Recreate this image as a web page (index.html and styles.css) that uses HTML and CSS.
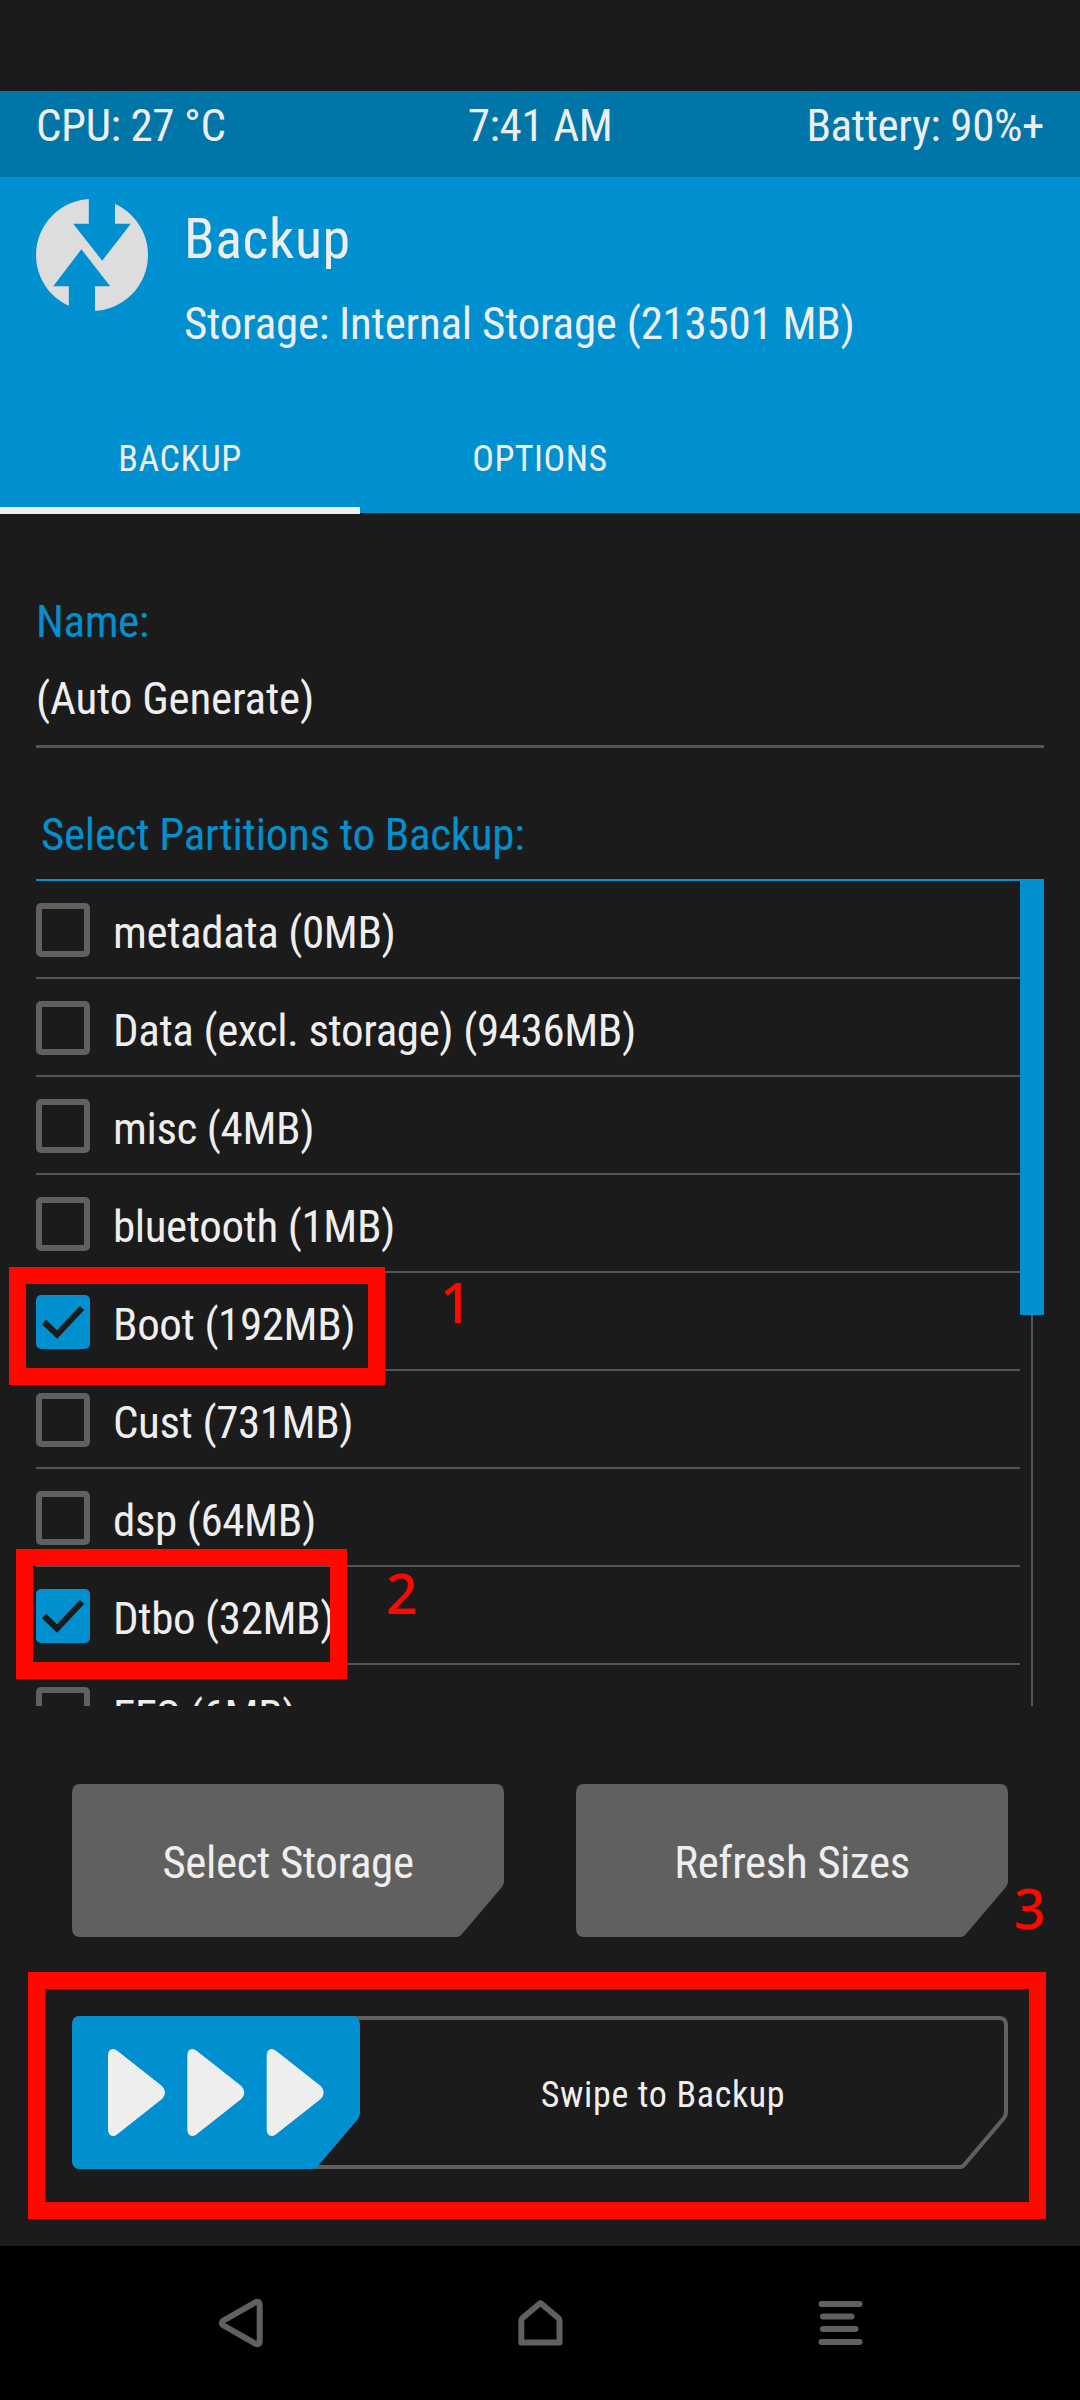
FILE: index.html
```html
<!DOCTYPE html>
<html lang="en">
<head>
<meta charset="utf-8">
<title>Backup</title>
<link rel="stylesheet" href="styles.css">
</head>
<body>
<div class="screen">
  <div class="statusbar">
    <span class="t">CPU: 27 °C</span>
    <span class="t mid">7:41 AM</span>
    <span class="t end">Battery: 90%+</span>
  </div>
  <header class="header">
    <div class="title-row">
      <svg class="logo" viewBox="0 0 112 112" width="112" height="112">
        <circle cx="56" cy="56" r="56" fill="#ddd"/>
        <path class="cut" d="M52.8 -1H79V24.7H94.8L66.2 61.7L37.2 24.7H52.8Z"/>
        <path class="cut" d="M59 113H32.8V87.3H17.2L45.4 50.3L74.2 87.3H59Z"/>
      </svg>
      <div class="titles">
        <h1 class="title"><span class="t">Backup</span></h1>
        <p class="subtitle"><span class="t">Storage: Internal Storage (213501 MB)</span></p>
      </div>
    </div>
    <nav class="tabs">
      <div class="tab active"><span class="t">BACKUP</span></div>
      <div class="tab"><span class="t">OPTIONS</span></div>
    </nav>
  </header>
  <main class="content">
    <div class="label"><span class="t">Name:</span></div>
    <div class="field"><span class="t">(Auto Generate)</span></div>
    <div class="list-title"><span class="t">Select Partitions to Backup:</span></div>
    <div class="list">
      <ul class="rows">
        <li class="row"><i class="box"></i><span class="t">metadata (0MB)</span></li>
        <li class="row"><i class="box"></i><span class="t">Data (excl. storage) (9436MB)</span></li>
        <li class="row"><i class="box"></i><span class="t">misc (4MB)</span></li>
        <li class="row"><i class="box"></i><span class="t">bluetooth (1MB)</span></li>
        <li class="row"><svg class="check" viewBox="0 0 54 54"><rect width="54" height="54" rx="5"/><path d="M8 27L21 39.5L46 13"/></svg><span class="t">Boot (192MB)</span></li>
        <li class="row"><i class="box"></i><span class="t">Cust (731MB)</span></li>
        <li class="row"><i class="box"></i><span class="t">dsp (64MB)</span></li>
        <li class="row"><svg class="check" viewBox="0 0 54 54"><rect width="54" height="54" rx="5"/><path d="M8 27L21 39.5L46 13"/></svg><span class="t">Dtbo (32MB)</span></li>
        <li class="row"><i class="box"></i><span class="t">EFS (6MB)</span></li>
      </ul>
      <div class="scroll"><div class="thumb"></div><div class="track"></div></div>
    </div>
    <div class="buttons">
      <div class="button">
        <svg viewBox="0 0 432 153"><path d="M8 0H424Q432 0 432 9V98Q432 100 430 103L390 150Q388 153 384 153H8Q0 153 0 144V9Q0 0 8 0Z"/></svg>
        <span class="t">Select Storage</span>
      </div>
      <div class="button">
        <svg viewBox="0 0 432 153"><path d="M8 0H424Q432 0 432 9V98Q432 100 430 103L390 150Q388 153 384 153H8Q0 153 0 144V9Q0 0 8 0Z"/></svg>
        <span class="t">Refresh Sizes</span>
      </div>
    </div>
    <div class="slider">
      <svg viewBox="0 0 936 153">
        <path class="outline" d="M8 2H927Q934 2 934 9V96Q934 99 932 102L893 148Q891 151 888 151H8Q2 151 2 144V9Q2 2 8 2Z"/>
        <path class="handle" d="M8 0H280Q288 0 288 9V97Q288 100 286 103L246 150Q244 153 241 153H8Q0 153 0 144V9Q0 0 8 0Z"/>
        <g class="arrows">
          <path id="arrow" d="M36 40Q36 33 41 33Q43 33 45 34.5L90 70Q93 73 93 76.5Q93 80 90 83L45 118.5Q43 120 41 120Q36 120 36 113Z"/>
          <use href="#arrow" x="79.3"/>
          <use href="#arrow" x="158.7"/>
        </g>
      </svg>
      <span class="t">Swipe to Backup</span>
    </div>
  </main>
  <nav class="navbar">
    <svg viewBox="0 0 54 54"><path d="M46.7 9.5Q46.7 4 42 6.5L10.5 24.5Q7 27 10.5 29.5L42 47.5Q46.7 50 46.7 44.5Z"/></svg>
    <svg viewBox="0 0 54 54"><path d="M8.3 46.5V25Q8.3 23 9.5 22L27.4 7L45.300 22Q46.5 23 46.5 25V46.500Z"/></svg>
    <svg viewBox="0 0 54 54"><path d="M8.5 8H46.5M10 20.5H38.5M10 33H42.5M8.5 46H46.5"/></svg>
  </nav>
  <div class="mark mark-boot"></div>
  <div class="mark mark-dtbo"></div>
  <div class="mark mark-swipe"></div>
  <div class="num num-1">1</div>
  <div class="num num-2">2</div>
  <div class="num num-3">3</div>
</div>
</body>
</html>
```
FILE: styles.css
```css
* { box-sizing: border-box; margin: 0; padding: 0; }
body {
  background: #1b1b1b;
  color: #eee;
  font-family: "Roboto Condensed", Roboto, sans-serif;
  font-stretch: 75%;
  font-size: 45px;
  line-height: 54px;
  font-weight: 400;
  letter-spacing: -0.4px;
}
.screen { position: relative; width: 1080px; height: 2400px; padding-top: 91px; overflow: hidden; }
.t { display: inline-block; white-space: nowrap; }

.statusbar { display: grid; grid-template-columns: 1fr 1fr 1fr; height: 86px; padding: 8px 36px 0; background: #0075a8; }
.mid { justify-self: center; }
.end { justify-self: end; }

.header { height: 336px; background: #0090d0; display: flex; flex-direction: column; justify-content: space-between; }
.title-row { display: flex; gap: 36px; padding: 22px 36px 0; }
.logo { flex: none; }
.cut { fill: #0090d0; }
.title { font-size: 56px; line-height: 66px; font-weight: 400; padding-top: 7px; letter-spacing: 0.6px; }
.subtitle { padding-top: 25px; letter-spacing: -0.25px; }
.tabs { display: flex; font-size: 36px; line-height: 44px; letter-spacing: 0.5px; }
.tab { width: 360px; height: 77px; padding-top: 1px; text-align: center; }
.active { border-bottom: 6px solid #eee; box-shadow: 0 1px #eee; }

.content { height: 1733px; padding: 82px 36px 0; }
.label { color: #0090d0; }
.field { height: 99px; padding-top: 23px; border-bottom: 3px solid #555; letter-spacing: -0.2px; }
.list-title { color: #0090d0; padding: 60px 0 0 5px; height: 131px; letter-spacing: -0.28px; }
.list { display: flex; height: 827px; overflow: hidden; border-top: 2px solid #0090d0; }
.rows { flex: 1; list-style: none; }
.row { display: flex; align-items: flex-start; gap: 23px; height: 98px; padding-top: 22px; border-bottom: 2px solid #555; }
.row .t { padding-top: 3px; }
.box { width: 54px; height: 54px; border: 6px solid #606060; border-radius: 5px; }
.check { width: 54px; height: 54px; }
.check rect { fill: #0090d0; }
.check path { fill: none; stroke: #1b1b1b; stroke-width: 6; }
.scroll { width: 24px; display: flex; flex-direction: column; align-items: center; }
.thumb { width: 24px; height: 434px; background: #0090d0; }
.track { width: 2px; flex: 1; background: #555; }

.buttons { display: flex; gap: 72px; padding: 78px 36px 0; }
.button { display: grid; width: 432px; height: 153px; place-items: center; }
.button > *, .slider > * { grid-area: 1 / 1; }
.button svg { width: 432px; height: 153px; fill: #606060; }
.button .t { padding-top: 5px; }
.slider { display: grid; align-items: center; margin: 79px 36px 0; height: 153px; font-size: 36px; letter-spacing: 0.65px; }
.slider svg { width: 936px; height: 153px; }
.slider .t { justify-self: center; padding: 4px 0 0 246px; }
.outline { fill: none; stroke: #606060; stroke-width: 4; }
.handle { fill: #0090d0; }
.arrows { fill: #eee; }

.navbar { display: flex; justify-content: space-around; align-items: center; height: 154px; padding: 0 90px; background: #000; }
.navbar svg { width: 54px; height: 54px; fill: none; stroke: #606060; stroke-width: 6; stroke-linejoin: round; stroke-linecap: round; }

.mark { position: absolute; border: 17px solid #ff0800; }
.mark-boot { left: 9px; top: 1267px; width: 376px; height: 118px; }
.mark-dtbo { left: 16px; top: 1549px; width: 331px; height: 130px; }
.mark-swipe { left: 28px; top: 1972px; width: 1018px; height: 247px; }
.num { position: absolute; color: #ff0800; font: 500 56px/60px "Noto Sans", sans-serif; }
.num-1 { left: 440px; top: 1271px; }
.num-2 { left: 386px; top: 1562px; }
.num-3 { left: 1014px; top: 1877px; }
```
